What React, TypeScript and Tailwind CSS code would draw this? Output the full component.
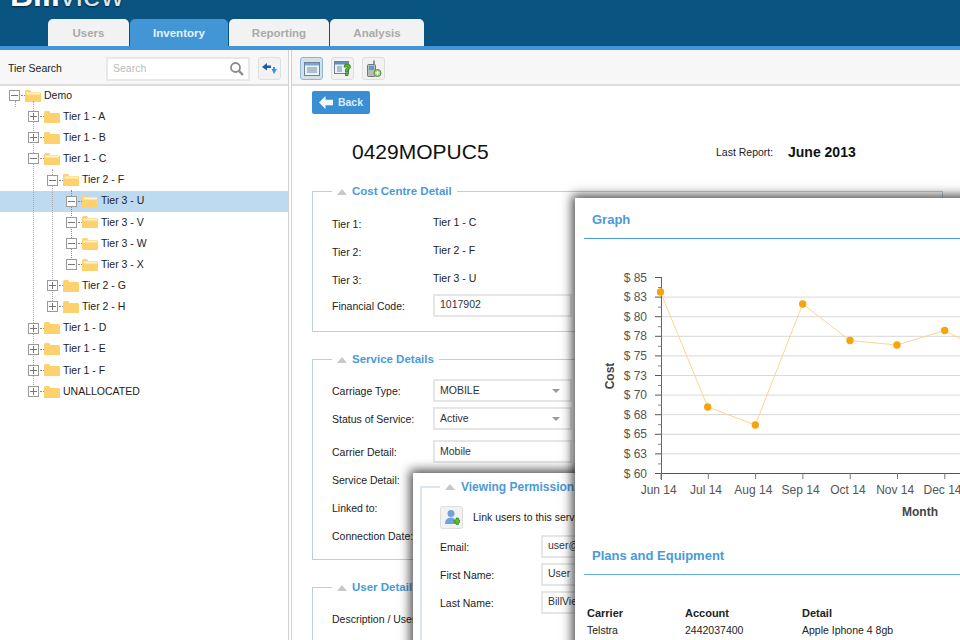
const tabs = ["Users", "Inventory", "Reporting", "Analysis"];

const tree = [
  { label: "Demo", depth: 0, open: true },
  { label: "Tier 1 - A", depth: 1 },
  { label: "Tier 1 - B", depth: 1 },
  { label: "Tier 1 - C", depth: 1, open: true },
  { label: "Tier 2 - F", depth: 2, open: true },
  { label: "Tier 3 - U", depth: 3, open: true, selected: true },
  { label: "Tier 3 - V", depth: 3, open: true },
  { label: "Tier 3 - W", depth: 3, open: true },
  { label: "Tier 3 - X", depth: 3, open: true },
  { label: "Tier 2 - G", depth: 2 },
  { label: "Tier 2 - H", depth: 2 },
  { label: "Tier 1 - D", depth: 1 },
  { label: "Tier 1 - E", depth: 1 },
  { label: "Tier 1 - F", depth: 1 },
  { label: "UNALLOCATED", depth: 1 },
];

const yLabels = ["$ 85", "$ 83", "$ 80", "$ 78", "$ 75", "$ 73", "$ 70", "$ 68", "$ 65", "$ 63", "$ 60"];
const months = ["Jun 14", "Jul 14", "Aug 14", "Sep 14", "Oct 14", "Nov 14", "Dec 14"];
const points = [
  [80.5, 122],
  [127.7, 237],
  [175.3, 255],
  [222.7, 134],
  [270, 170.5],
  [317, 175],
  [364.7, 160.5],
  [400, 179],
];

function Folder({ open }: { open?: boolean }) {
  return (
    <svg width="16" height="14" viewBox="0 0 16 14" className="shrink-0">
      <path d="M0 2.5 Q0 1 1.5 1 H5 L6.5 3 H14.5 Q16 3 16 4.5 V13 H0 Z" fill="#fdd26e" />
      {open && <path d="M1.5 3.5 H15 V5.5 H1.5 Z" fill="#fff3cf" />}
    </svg>
  );
}

function Toggle({ open }: { open?: boolean }) {
  return (
    <span className="relative block h-[11px] w-[11px] shrink-0 border border-[#9a9a9a] bg-white">
      <span className="absolute top-1 left-px h-px w-[7px] bg-[#777]" />
      {!open && <span className="absolute top-px left-1 h-[7px] w-px bg-[#777]" />}
    </span>
  );
}

function TreeRow({ label, depth, open, selected }: { label: string; depth: number; open?: boolean; selected?: boolean }) {
  const indent = ["pl-[9px]", "pl-[28px]", "pl-[47px]", "pl-[66px]"][depth];
  return (
    <div className={`flex h-[21.15px] items-center ${indent} ${selected ? "bg-[#bedaf0]" : ""}`}>
      <Toggle open={open} />
      <span className="ml-px w-[4px] border-t border-dotted border-[#888]" />
      <Folder open={open} />
      <span className="ml-[3px] text-[10.5px] text-[#222]">{label}</span>
    </div>
  );
}

function ToolButton({ children, active }: { children: React.ReactNode; active?: boolean }) {
  return (
    <div className={`flex h-[23px] w-[23px] items-center justify-center rounded-[3px] border ${active ? "border-[#8cb8dc] bg-[#d5dfe8]" : "border-[#dedede] bg-[#f2f2f2]"}`}>
      {children}
    </div>
  );
}

function Legend({ title, className, children }: { title: string; className: string; children?: React.ReactNode }) {
  return (
    <fieldset className={`ml-[20px] w-[631px] border border-[#b9cfe2] pl-[19px] ${className}`}>
      <legend className="flex items-center px-[5px] text-[11.5px] font-bold text-[#4a9ad8]">
        <span className="mr-[5px] h-0 w-0 border-x-[5px] border-b-[6px] border-x-transparent border-b-[#c8c8c8]" />
        {title}
      </legend>
      {children}
    </fieldset>
  );
}

function Field({ label, value, select, className }: { label: string; value?: string; select?: boolean; className: string }) {
  return (
    <div className={`flex h-[23px] items-center ${className}`}>
      <span className="mt-[3px] w-[101px] text-[10.5px] whitespace-nowrap text-[#222]">{label}</span>
      {value && (
        <div className="flex h-[23px] w-[139px] items-center justify-between border-2 border-[#e6e6e6] bg-white pl-[5px] pr-[10px] text-[10.5px] text-[#333]">
          {value}
          {select && <span className="h-0 w-0 border-x-[4px] border-t-[4px] border-x-transparent border-t-[#999]" />}
        </div>
      )}
    </div>
  );
}

function TextRow({ label, value, className }: { label: string; value: string; className: string }) {
  return (
    <div className={`flex items-center text-[10.5px] text-[#222] ${className}`}>
      <span className="w-[101px]">{label}</span>
      <span className="-mt-[4px]">{value}</span>
    </div>
  );
}

export default function App() {
  return (
    <div className="relative h-[640px] w-[960px] overflow-hidden bg-white font-['Liberation_Sans',Arial,sans-serif]">
      <header className="relative h-[46px] overflow-hidden bg-[#0a5482]">
        <div className="absolute -top-[21px] left-[10px] text-[32px] leading-[32px] text-white [text-shadow:0_1px_2px_rgba(0,0,0,0.6)]">
          <span className="font-bold">Bill</span>
          <span className="text-[#d9e6ef]">view</span>
        </div>
        <nav className="flex h-full items-end gap-px pl-[48px]">
          {tabs.map((tab) => (
            <div
              key={tab}
              className={`flex h-[27px] items-center justify-center rounded-t-[5px] pt-[2px] text-[11.5px] font-bold ${
                tab === "Inventory" ? "w-[98px] bg-[#4296d6] text-[#e6f1fa]" : "bg-[#f2f2f2] text-[#aaaaaa]"
              } ${tab === "Users" ? "w-[81px]" : ""} ${tab === "Reporting" ? "w-[100px]" : ""} ${tab === "Analysis" ? "w-[94px]" : ""}`}
            >
              {tab}
            </div>
          ))}
        </nav>
      </header>
      <div className="h-[4px] bg-[#4296d6]" />

      <div className="flex h-[590px]">
        <aside className="w-[288px] shrink-0">
          <div className="flex h-[36px] items-center border-b-2 border-[#dcdcdc] bg-[#f7f7f7] pt-[3px] pl-[8px]">
            <span className="w-[98px] text-[10.5px] text-[#222]">Tier Search</span>
            <div className="flex h-[24px] w-[144px] items-center justify-between border-2 border-[#e8e8e8] bg-white pl-[5px] pr-[3px] text-[10.5px] text-[#bbbbbb]">
              Search
              <svg width="16" height="16" viewBox="0 0 16 16" fill="none" stroke="#8c8c8c">
                <circle cx="6.5" cy="6.5" r="4.5" strokeWidth="1.8" />
                <path d="M10 10 L14 14" strokeWidth="2.4" />
              </svg>
            </div>
            <div className="ml-[8px] flex h-[23px] w-[23px] items-center justify-center rounded-[3px] border border-[#e0e0e0] bg-[#f2f2f2]">
              <svg width="15" height="12" viewBox="0 0 15 12">
                <path d="M0 4 L5 0 V2.5 H9 V5 H5 V7.5 Z" fill="#1a5f9e" />
                <path d="M15 6 L12 11 L9.500 6 H11 V4 H13 V6 Z" fill="#2e9ae0" />
              </svg>
            </div>
          </div>
          <div className="relative -mt-px">
            <span className="absolute top-[16px] left-[15px] h-[6px] border-l border-dotted border-[#aaa]" />
            <span className="absolute top-[16px] left-[33px] h-[296px] border-l border-dotted border-[#aaa]" />
            <span className="absolute top-[84px] left-[52px] h-[138px] border-l border-dotted border-[#aaa]" />
            <span className="absolute top-[105px] left-[71px] h-[72px] border-l border-dotted border-[#888]" />
            {tree.map((row) => (
              <TreeRow key={row.label} {...row} />
            ))}
          </div>
        </aside>

        <div className="w-[4px] shrink-0 border-x border-[#d0d0d0] bg-white" />

        <main className="min-w-0 flex-1">
          <div className="flex h-[36px] items-center gap-[8px] border-b-2 border-[#dcdcdc] bg-[#f7f7f7] pt-[3px] pl-[8px]">
            <ToolButton active>
              <svg width="16" height="14" viewBox="0 0 16 14">
                <rect x="0.500" y="0.500" width="15" height="13" fill="#eaf2fa" stroke="#6f8296" />
                <rect x="1" y="1" width="14" height="2.500" fill="#7ea6cc" />
                <path d="M3 6 H13 M3 8 H13 M3 10 H13" stroke="#6f8ba6" />
              </svg>
            </ToolButton>
            <ToolButton>
              <svg width="18" height="16" viewBox="0 0 18 16">
                <rect x="0.500" y="0.500" width="14" height="12" fill="#eaf2fa" stroke="#6f8296" />
                <rect x="1" y="1" width="13" height="2.500" fill="#5f8fc0" />
                <path d="M3 6 H8 M3 8 H8 M3 10 H8" stroke="#6f8ba6" />
                <path d="M10 6 Q10 3 13 3 Q16.500 3 16.500 6 Q16.500 8 14 9 V11 H11.500 V8 Q14 7.500 14 6 H10" fill="#5cc22c" stroke="#1f6b12" strokeWidth="0.700" />
                <rect x="11.500" y="12" width="2.500" height="2.500" fill="#5cc22c" stroke="#1f6b12" strokeWidth="0.700" />
              </svg>
            </ToolButton>
            <ToolButton>
              <svg width="16" height="18" viewBox="0 0 16 18">
                <rect x="1.500" y="4.500" width="8" height="12" rx="1" fill="#b4bcb4" stroke="#6d7a6d" />
                <rect x="3" y="6" width="5" height="4" fill="#5c9ad8" />
                <path d="M8 4 V0.500" stroke="#555" strokeWidth="1.200" />
                <circle cx="11.500" cy="13" r="3.500" fill="#a4d67c" stroke="#5f8a45" />
                <path d="M9.500 13 H13.500 M11.500 11 V15" stroke="#fff" />
              </svg>
            </ToolButton>
          </div>

          <div className="pt-[5px] pl-[20px]">
            <div className="flex h-[23px] w-[58px] items-center justify-center gap-[5px] rounded-[2px] bg-[#3a8fd4] text-[10.5px] font-bold text-[#dcecf8]">
              <svg width="14" height="13" viewBox="0 0 14 13">
                <path d="M0 6.500 L6.500 0 V3.800 H14 V9.200 H6.500 V13 Z" fill="#f3f8fc" />
              </svg>
              Back
            </div>
          </div>

          <div className="mt-[26px] flex h-[24px] items-center pl-[60px]">
            <h1 className="w-[364px] text-[21px] leading-[24px] text-[#111]">0429MOPUC5</h1>
            <span className="mt-[2px] w-[72px] text-[10.5px] text-[#222]">Last Report:</span>
            <span className="text-[14px] font-bold text-[#111]">June 2013</span>
          </div>

          <Legend title="Cost Centre Detail" className="mt-[19px] h-[149px]">
            <TextRow label="Tier 1:" value="Tier 1 - C" className="mt-[16.5px]" />
            <TextRow label="Tier 2:" value="Tier 2 - F" className="mt-[12.25px]" />
            <TextRow label="Tier 3:" value="Tier 3 - U" className="mt-[12.25px]" />
            <Field label="Financial Code:" value="1017902" className="mt-[5px]" />
          </Legend>

          <Legend title="Service Details" className="mt-[19px] h-[209px]">
            <Field label="Carriage Type:" value="MOBILE" select className="mt-[11px]" />
            <Field label="Status of Service:" value="Active" select className="mt-[5px]" />
            <Field label="Carrier Detail:" value="Mobile" className="mt-[10px]" />
            <Field label="Service Detail:" className="mt-[5px]" />
            <Field label="Linked to:" className="mt-[5px]" />
            <Field label="Connection Date:" className="mt-[5px]" />
          </Legend>

          <Legend title="User Detail" className="mt-[19px] h-[80px]">
            <Field label="Description / User:" className="mt-[11px]" />
          </Legend>
        </main>
      </div>

      {/* viewing permissions window */}
      <section className="absolute top-[473px] left-[413px] h-[200px] w-[200px] bg-white pt-[5px] pl-[7px] shadow-[0_0_10px_3px_rgba(0,0,0,0.7)]">
        <fieldset className="h-[300px] w-[300px] border-2 border-[#dbe6f0] pl-[18px]">
          <legend className="flex items-center px-[5px] text-[12px] font-bold text-[#4a9ad8]">
            <span className="mr-[6px] h-0 w-0 border-x-[5px] border-b-[6px] border-x-transparent border-b-[#c8c8c8]" />
            Viewing Permissions
          </legend>
          <div className="mt-[10px] flex items-center">
            <div className="flex h-[23px] w-[23px] items-center justify-center rounded-[3px] border border-[#dedede] bg-[#f2f2f2]">
              <svg width="16" height="17" viewBox="0 0 16 17">
                <circle cx="7" cy="4.500" r="3.500" fill="#6fa3dc" />
                <path d="M1 15 Q1 8.500 7 8.500 Q12 8.500 12 15 Z" fill="#6fa3dc" />
                <path d="M10 11 H12 V9 H14.500 V11 H16 V13.500 H14.500 V15.500 H12 V13.500 H10 Z" fill="#5cc22c" stroke="#2c7a1a" strokeWidth="0.600" />
              </svg>
            </div>
            <span className="mt-px ml-[10px] text-[10.5px] whitespace-nowrap text-[#222]">Link users to this service</span>
          </div>
          <Field label="Email:" value="user@" className="mt-[5.5px]" />
          <Field label="First Name:" value="User" className="mt-[5px]" />
          <Field label="Last Name:" value="BillView" className="mt-[5px]" />
        </fieldset>
      </section>

      {/* graph window */}
      <section className="absolute top-[198px] left-[575px] h-[460px] w-[420px] bg-white pt-[13px] pl-[9px] shadow-[0_0_10px_3px_rgba(0,0,0,0.7)]">
        <h2 className="ml-[8px] text-[13px] leading-[18px] font-bold text-[#4a9ad8]">Graph</h2>
        <div className="mt-[9px] h-px bg-[#4a9ad8]" />
        <svg width="400" height="308" viewBox="0 0 400 308" className="block font-['Liberation_Sans',Arial,sans-serif]">
          <g transform="translate(-4,-69)">
            {yLabels.map((label, i) => (
              <g key={label}>
                {i > 0 && i < 10 && <line x1="81" x2="400" y1={107.5 + i * 19.6} y2={107.5 + i * 19.6} stroke="#d8d8d8" />}
                <line x1="75" x2="81" y1={107.5 + i * 19.6} y2={107.5 + i * 19.6} stroke="#555" />
                {i < 10 && <line x1="78" x2="81" y1={117.5 + i * 19.6} y2={117.5 + i * 19.6} stroke="#888" />}
                <text x="67" y={111.5 + i * 19.6} textAnchor="end" fontSize="12" fill="#555">{label}</text>
              </g>
            ))}
            <line x1="81.500" x2="81.500" y1="107" y2="310" stroke="#666" />
            <line x1="75" x2="400" y1="303.500" y2="303.500" stroke="#555" />
            {months.map((m, i) => (
              <g key={m}>
                <line x1={81 + i * 47.3} x2={81 + i * 47.3} y1="303" y2="309" stroke="#777" />
                <text x={78.7 + i * 47.3} y="324" textAnchor="middle" fontSize="12" fill="#555">{m}</text>
              </g>
            ))}
            <polyline points={points.map((p) => p.join(",")).join(" ")} fill="none" stroke="#fbd592" />
            {points.slice(0, 7).map(([x, y]) => (
              <circle key={x} cx={x} cy={y} r="3.700" fill="#f5a50a" />
            ))}
            <text x="0" y="0" transform="translate(34,206) rotate(-90)" textAnchor="middle" fontSize="12" fontWeight="700" fill="#444">Cost</text>
            <text x="340" y="346" textAnchor="middle" fontSize="12" fontWeight="700" fill="#444">Month</text>
          </g>
        </svg>
        <h2 className="ml-[8px] text-[13px] leading-[18px] font-bold text-[#4a9ad8]">Plans and Equipment</h2>
        <div className="mt-[9px] h-px bg-[#64aee4]" />
        <div className="mt-[30px] ml-[3px] grid grid-cols-[98px_117px_1fr] text-[10.5px] text-[#222]">
          <span className="text-[11px] font-bold">Carrier</span>
          <span className="text-[11px] font-bold">Account</span>
          <span className="text-[11px] font-bold">Detail</span>
          <span className="mt-[1.5px]">Telstra</span>
          <span className="mt-[1.5px]">2442037400</span>
          <span className="mt-[1.5px]">Apple Iphone 4 8gb</span>
        </div>
      </section>
    </div>
  );
}
